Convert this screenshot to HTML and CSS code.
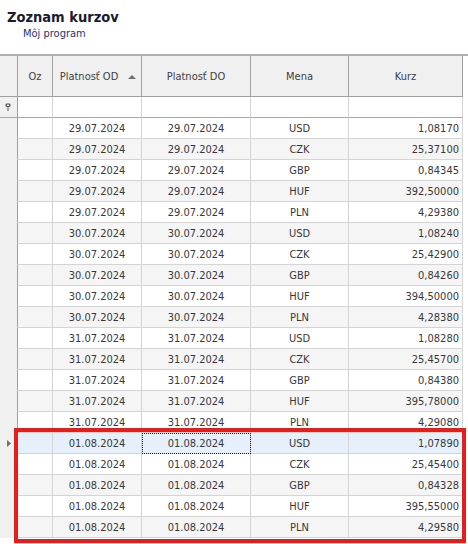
FILE: index.html
```html
<!DOCTYPE html>
<html>
<head>
<meta charset="utf-8">
<link rel="stylesheet" href="styles.css">
</head>
<body>
<div class="page">
  <div class="head">
    <div class="title">Zoznam kurzov</div>
    <div class="sub">Môj program</div>
  </div>
  <div class="gridwrap">
    <div class="grid">
      <div class="row hdr">
        <div class="c ind"></div>
        <div class="c">Oz</div>
        <div class="c sorted"><span class="htext">Platnosť OD</span><span class="arrow"></span></div>
        <div class="c">Platnosť DO</div>
        <div class="c">Mena</div>
        <div class="c">Kurz</div>
      </div>
      <div class="row flt">
        <div class="c ind"><svg class="pin" width="6" height="8" viewBox="0 0 6 8"><path d="M1 0.5h4l0.5 1v1.5l-1 1h-1v4h-1v-4h-1l-1-1v-1.5z" fill="#5a5a5a"/><rect x="2" y="1.5" width="2" height="1.5" fill="#f0f0f0"/></svg></div>
        <div class="c"></div>
        <div class="c"></div>
        <div class="c"></div>
        <div class="c"></div>
        <div class="c"></div>
      </div>
      <div class="row r"><div class="c ind"></div><div class="c"></div><div class="c">29.07.2024</div><div class="c">29.07.2024</div><div class="c">USD</div><div class="c num">1,08170</div></div>
      <div class="row r alt"><div class="c ind"></div><div class="c"></div><div class="c">29.07.2024</div><div class="c">29.07.2024</div><div class="c">CZK</div><div class="c num">25,37100</div></div>
      <div class="row r"><div class="c ind"></div><div class="c"></div><div class="c">29.07.2024</div><div class="c">29.07.2024</div><div class="c">GBP</div><div class="c num">0,84345</div></div>
      <div class="row r alt"><div class="c ind"></div><div class="c"></div><div class="c">29.07.2024</div><div class="c">29.07.2024</div><div class="c">HUF</div><div class="c num">392,50000</div></div>
      <div class="row r"><div class="c ind"></div><div class="c"></div><div class="c">29.07.2024</div><div class="c">29.07.2024</div><div class="c">PLN</div><div class="c num">4,29380</div></div>
      <div class="row r alt"><div class="c ind"></div><div class="c"></div><div class="c">30.07.2024</div><div class="c">30.07.2024</div><div class="c">USD</div><div class="c num">1,08240</div></div>
      <div class="row r"><div class="c ind"></div><div class="c"></div><div class="c">30.07.2024</div><div class="c">30.07.2024</div><div class="c">CZK</div><div class="c num">25,42900</div></div>
      <div class="row r alt"><div class="c ind"></div><div class="c"></div><div class="c">30.07.2024</div><div class="c">30.07.2024</div><div class="c">GBP</div><div class="c num">0,84260</div></div>
      <div class="row r"><div class="c ind"></div><div class="c"></div><div class="c">30.07.2024</div><div class="c">30.07.2024</div><div class="c">HUF</div><div class="c num">394,50000</div></div>
      <div class="row r alt"><div class="c ind"></div><div class="c"></div><div class="c">30.07.2024</div><div class="c">30.07.2024</div><div class="c">PLN</div><div class="c num">4,28380</div></div>
      <div class="row r"><div class="c ind"></div><div class="c"></div><div class="c">31.07.2024</div><div class="c">31.07.2024</div><div class="c">USD</div><div class="c num">1,08280</div></div>
      <div class="row r alt"><div class="c ind"></div><div class="c"></div><div class="c">31.07.2024</div><div class="c">31.07.2024</div><div class="c">CZK</div><div class="c num">25,45700</div></div>
      <div class="row r"><div class="c ind"></div><div class="c"></div><div class="c">31.07.2024</div><div class="c">31.07.2024</div><div class="c">GBP</div><div class="c num">0,84380</div></div>
      <div class="row r alt"><div class="c ind"></div><div class="c"></div><div class="c">31.07.2024</div><div class="c">31.07.2024</div><div class="c">HUF</div><div class="c num">395,78000</div></div>
      <div class="row r"><div class="c ind"></div><div class="c"></div><div class="c">31.07.2024</div><div class="c">31.07.2024</div><div class="c">PLN</div><div class="c num">4,29080</div></div>
      <div class="row r sel"><div class="c ind"><svg width="4" height="7" viewBox="0 0 4 7"><path d="M0 0L4 3.5L0 7z" fill="#707070"/></svg></div><div class="c"></div><div class="c">01.08.2024</div><div class="c focus">01.08.2024</div><div class="c">USD</div><div class="c num">1,07890</div></div>
      <div class="row r"><div class="c ind"></div><div class="c"></div><div class="c">01.08.2024</div><div class="c">01.08.2024</div><div class="c">CZK</div><div class="c num">25,45400</div></div>
      <div class="row r alt"><div class="c ind"></div><div class="c"></div><div class="c">01.08.2024</div><div class="c">01.08.2024</div><div class="c">GBP</div><div class="c num">0,84328</div></div>
      <div class="row r"><div class="c ind"></div><div class="c"></div><div class="c">01.08.2024</div><div class="c">01.08.2024</div><div class="c">HUF</div><div class="c num">395,55000</div></div>
      <div class="row r alt"><div class="c ind"></div><div class="c"></div><div class="c">01.08.2024</div><div class="c">01.08.2024</div><div class="c">PLN</div><div class="c num">4,29580</div></div>
    </div>
    <div class="mark"></div>
  </div>
</div>
</body>
</html>
```

FILE: styles.css
```css
html, body {
  margin: 0;
  padding: 0;
  background: #ffffff;
}
body {
  font-family: "DejaVu Sans", "Liberation Sans", sans-serif;
  font-stretch: condensed;
  font-size: 11px;
  color: #383838;
}
.page {
  width: 468px;
  height: 544px;
  overflow: hidden;
}
.head {
  height: 54px;
  box-sizing: border-box;
  padding: 7px 0 0 7px;
}
.title {
  font-size: 14.5px;
  font-weight: bold;
  line-height: 20px;
  color: #1a1a30;
}
.sub {
  padding-left: 16px;
  line-height: 14px;
  color: #1f3468;
}
.gridwrap {
  position: relative;
  border-top: 2px solid #b0b0b0;
}
.grid {
  width: 463px;
}
.row {
  display: grid;
  grid-template-columns: 18px 35px 89px 109px 98px 114px;
}
.c {
  box-sizing: border-box;
  border-right: 1px solid #d4d4d4;
  border-bottom: 1px solid #d4d4d4;
  display: flex;
  align-items: center;
  justify-content: center;
  white-space: nowrap;
}
.c.ind {
  background: #f0f0f0;
  border-right-color: #a0a0a0;
  border-bottom-color: #f0f0f0;
}
.hdr .c {
  height: 41px;
  background: #f0f0f0;
  border-right-color: #a0a0a0;
  border-bottom-color: #a0a0a0;
  color: #404040;
}
.hdr .c.ind {
  border-bottom-color: #a0a0a0;
}
.sorted {
  padding-right: 16px;
  position: relative;
}
.arrow {
  position: absolute;
  right: 5px;
  top: 19px;
  width: 0;
  height: 0;
  border-left: 4px solid transparent;
  border-right: 4px solid transparent;
  border-bottom: 4px solid #707070;
}
.flt .c {
  height: 21px;
  background: #ffffff;
  border-bottom-color: #a8a8a8;
}
.flt .c.ind {
  background: #f0f0f0;
  border-bottom-color: #a8a8a8;
}
.pin {
  margin-left: -2px;
}
.r .c {
  height: 21px;
  background: #ffffff;
}
.r.alt .c {
  background: #f5f5f5;
}
.r.sel .c {
  background: #e5f0fa;
}
.r .c.ind {
  background: #f0f0f0;
}
.c.num {
  justify-content: flex-end;
  padding-right: 3px;
}
.c.focus {
  outline: 1px dotted #202020;
  outline-offset: -1px;
}
.mark {
  position: absolute;
  left: 14px;
  top: 372px;
  width: 452px;
  height: 115px;
  box-sizing: border-box;
  border: 4px solid #e41d1d;
}
```
